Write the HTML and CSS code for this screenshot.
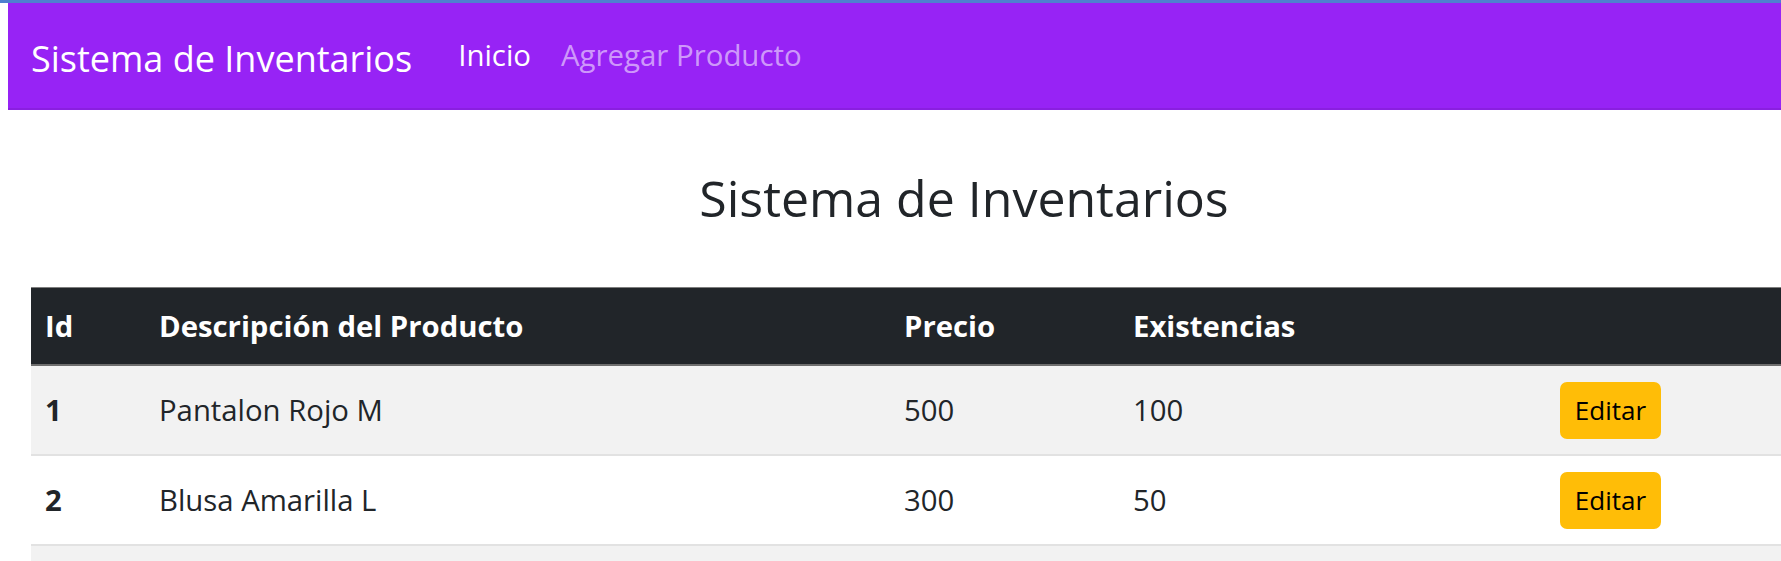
FILE: index.html
```html
<!DOCTYPE html>
<html lang="es">
<head>
<meta charset="utf-8">
<title>Sistema de Inventarios</title>
<link rel="stylesheet" href="styles.css">
</head>
<body>
<div class="topline"></div>
<nav class="navbar">
  <a class="brand" href="#">Sistema de Inventarios</a>
  <ul class="nav">
    <li><a class="nav-link active" href="#">Inicio</a></li>
    <li><a class="nav-link" href="#">Agregar Producto</a></li>
  </ul>
</nav>
<main class="container">
  <h3 class="title">Sistema de Inventarios</h3>
  <table class="table">
    <thead>
      <tr>
        <th class="c-id">Id</th>
        <th class="c-desc">Descripción del Producto</th>
        <th class="c-price">Precio</th>
        <th class="c-stock">Existencias</th>
        <th class="c-act"></th>
      </tr>
    </thead>
    <tbody>
      <tr class="odd">
        <th>1</th>
        <td>Pantalon Rojo M</td>
        <td>500</td>
        <td>100</td>
        <td><a class="btn" href="#">Editar</a></td>
      </tr>
      <tr>
        <th>2</th>
        <td>Blusa Amarilla L</td>
        <td>300</td>
        <td>50</td>
        <td><a class="btn" href="#">Editar</a></td>
      </tr>
      <tr class="odd empty">
        <th></th>
        <td></td>
        <td></td>
        <td></td>
        <td></td>
      </tr>
    </tbody>
  </table>
</main>
</body>
</html>
```
FILE: styles.css
```css
html, body {
  margin: 0;
  padding: 0;
  overflow: hidden;
  background: #ffffff;
}
body {
  font-family: "Open Sans", "Noto Sans", sans-serif;
  color: #212529;
  width: 1781px;
  height: 561px;
}
.topline {
  height: 3px;
  background: #4f7fcf;
}
.navbar {
  margin-left: 8px;
  height: 107px;
  background: #9723f5;
  display: flex;
  align-items: center;
  padding-left: 23px;
  box-sizing: border-box;
  border-bottom: 2px solid #8a1fe0;
}
.brand {
  color: #ffffff;
  text-decoration: none;
  font-size: 36px;
  line-height: 1;
  margin-top: 6px;
  margin-right: 46px;
}
.nav {
  list-style: none;
  margin: 0;
  padding: 0;
  display: flex;
  gap: 30px;
}
.nav-link {
  color: rgba(255, 255, 255, 0.55);
  text-decoration: none;
  font-size: 29.4px;
  line-height: 1;
}
.nav-link.active {
  color: #ffffff;
}
.container {
  margin-left: 31px;
  width: 1866px;
}
.title {
  margin: 0;
  padding-top: 58px;
  height: 177px;
  text-align: center;
  font-size: 50px;
  font-weight: 500;
  line-height: 1.2;
  box-sizing: border-box;
}
.table {
  width: 1866px;
  border-collapse: collapse;
  font-size: 29.3px;
  table-layout: fixed;
}
.table th,
.table td {
  text-align: left;
  padding: 0 0 0 14px;
  vertical-align: middle;
}
.table thead th {
  background: #212529;
  color: #ffffff;
  font-weight: 700;
  height: 76px;
  border-top: 1px solid #7d7d7d;
  border-bottom: 2px solid #6e6e6e;
}
.c-id { width: 100px; }
.c-desc { width: 731px; }
.c-price { width: 215px; }
.c-stock { width: 413px; }
.table tbody th,
.table tbody td {
  height: 88px;
  border-bottom: 2px solid #e2e2e2;
}
.table tbody th {
  font-weight: 700;
}
.table tbody tr.odd {
  background: #f2f2f2;
}
.btn {
  display: inline-flex;
  align-items: center;
  justify-content: center;
  width: 101px;
  height: 57px;
  box-sizing: border-box;
  background: #ffbd07;
  color: #000000;
  border-radius: 7px;
  text-decoration: none;
  font-size: 26px;
}
```
